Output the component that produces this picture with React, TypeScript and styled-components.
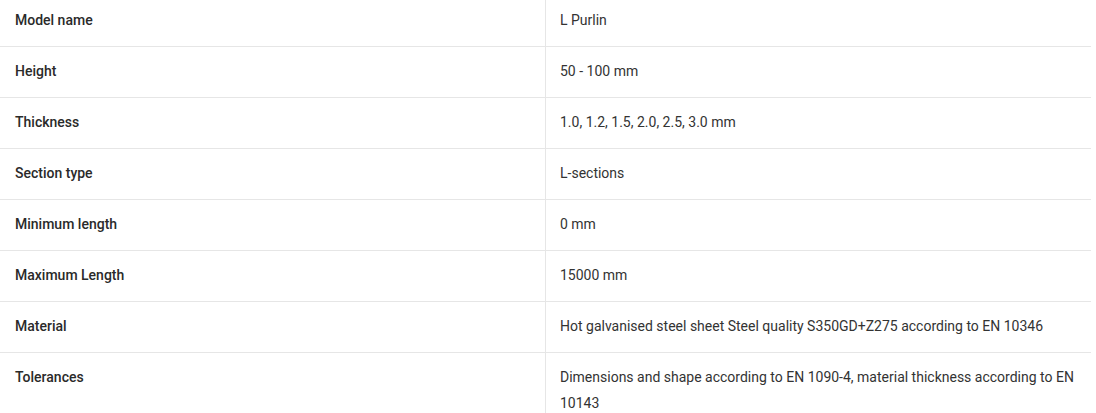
import React from "react";
import styled, { createGlobalStyle } from "styled-components";

const Global = createGlobalStyle`
  html, body { margin: 0; padding: 0; background: #fff; }
  body { font-family: Roboto, "Liberation Sans", Arial, sans-serif; }
`;

const Table = styled.div`
  width: 1091px;
  margin-top: -4px;
  display: flex;
  flex-direction: column;
`;

const Row = styled.div`
  display: grid;
  grid-template-columns: 546px 1fr;
  border-top: 1px solid #e6e6e6;
  &:first-child { border-top: none; }
`;

const Label = styled.div`
  padding: 11px 15px 13px;
  font-size: 14px;
  line-height: 26px;
  font-weight: 500;
  color: #2a2a2a;
  border-right: 1px solid #e6e6e6;
`;

const Value = styled.div`
  padding: 11px 14px 13px;
  font-size: 14px;
  line-height: 26px;
  font-weight: 400;
  color: #333;
`;

const rows: [string, string][] = [
  ["Model name", "L Purlin"],
  ["Height", "50 - 100 mm"],
  ["Thickness", "1.0, 1.2, 1.5, 2.0, 2.5, 3.0 mm"],
  ["Section type", "L-sections"],
  ["Minimum length", "0 mm"],
  ["Maximum Length", "15000 mm"],
  ["Material", "Hot galvanised steel sheet Steel quality S350GD+Z275 according to EN 10346"],
  ["Tolerances", "Dimensions and shape according to EN 1090-4, material thickness according to EN 10143"],
];

export default function App() {
  return (
    <>
      <Global />
      <Table>
        {rows.map(([k, v]) => (
          <Row key={k}>
            <Label>{k}</Label>
            <Value>{v}</Value>
          </Row>
        ))}
      </Table>
    </>
  );
}
